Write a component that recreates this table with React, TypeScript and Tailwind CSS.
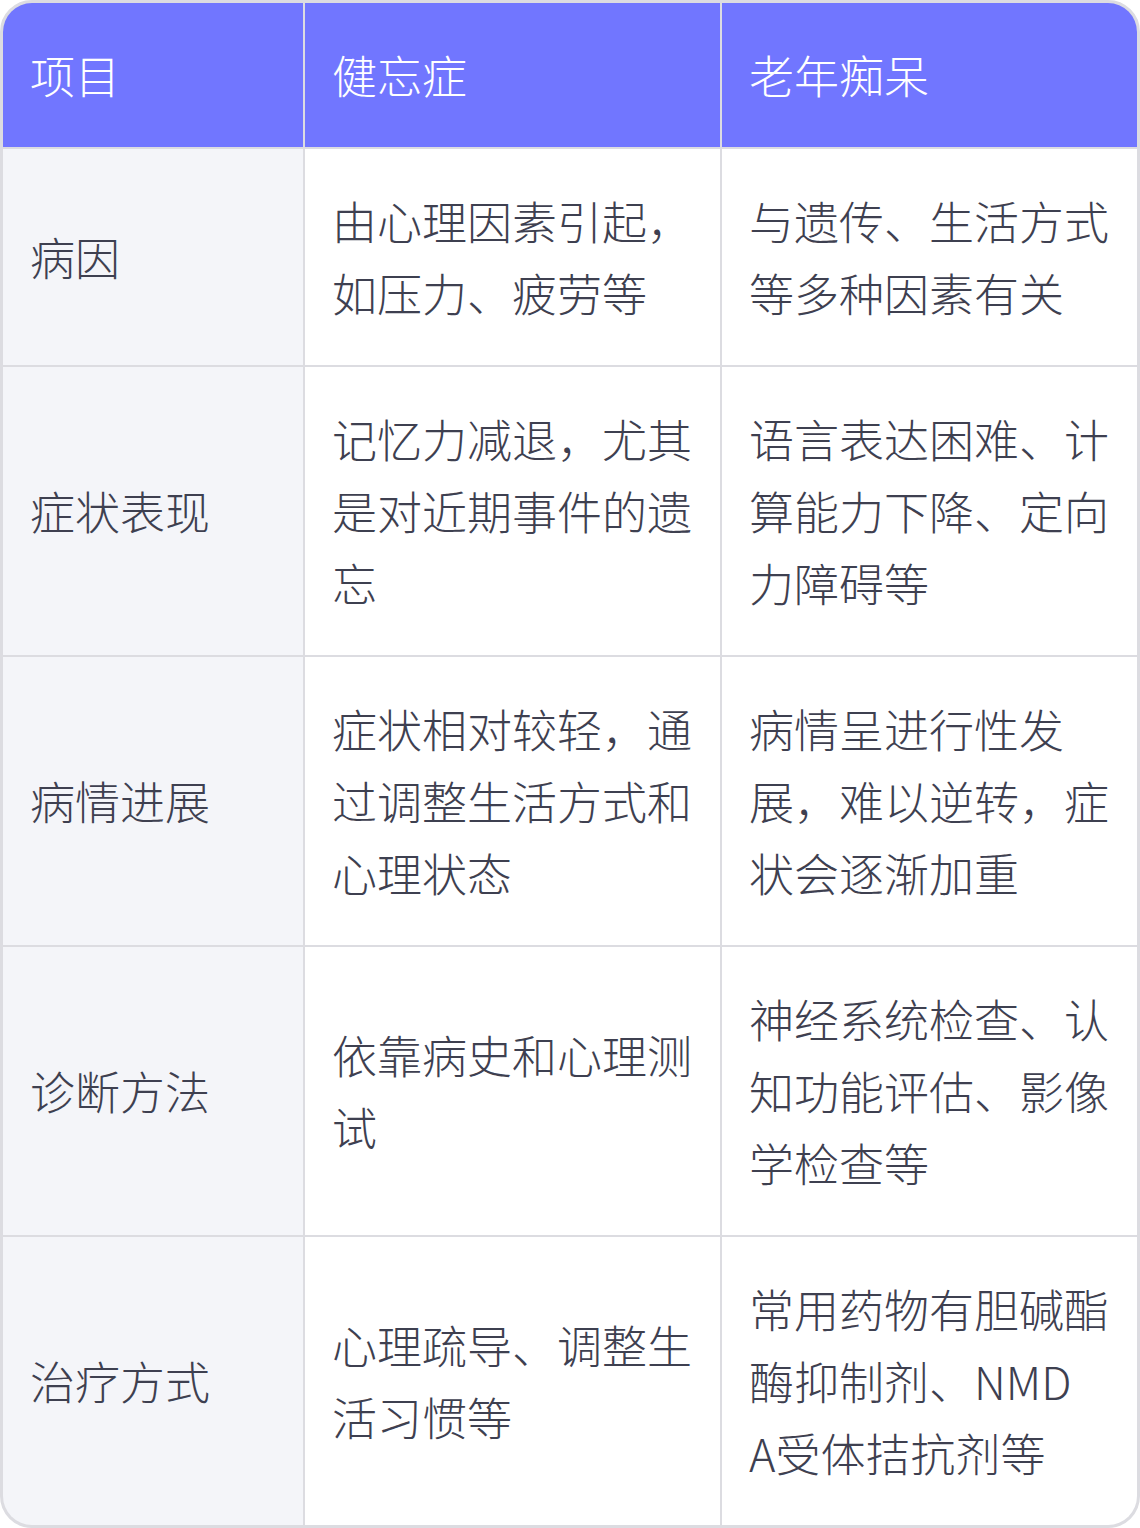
import React from "react";

const rows: [string, React.ReactNode, React.ReactNode][] = [
  ["病因", "由心理因素引起，如压力、疲劳等", "与遗传、生活方式等多种因素有关"],
  ["症状表现", "记忆力减退，尤其是对近期事件的遗忘", "语言表达困难、计算能力下降、定向力障碍等"],
  ["病情进展", "症状相对较轻，通过调整生活方式和心理状态", "病情呈进行性发展，难以逆转，症状会逐渐加重"],
  ["诊断方法", "依靠病史和心理测试", "神经系统检查、认知功能评估、影像学检查等"],
  [
    "治疗方式",
    "心理疏导、调整生活习惯等",
    <>
      常用药物有胆碱酯酶抑制剂、NMD
      <br />
      A受体拮抗剂等
    </>,
  ],
];

export default function App() {
  return (
    <div
      className="w-[1140px] h-[1528px] bg-white"
      style={{ fontFamily: '"Noto Sans CJK SC", "Noto Sans", sans-serif' }}
    >
      <div className="rounded-[32px] border-[3px] border-[#dcdce1] overflow-hidden bg-[#dcdce1]">
        <div className="grid grid-cols-[300px_415px_415px] gap-[2px] text-[45px] leading-[72px] font-light">
          {["项目", "健忘症", "老年痴呆"].map((h) => (
            <div key={h} className="bg-[#7176ff] text-white pl-[27px] pr-[27px] py-[36px]">
              {h}
            </div>
          ))}
          {rows.map((r) => (
            <React.Fragment key={r[0]}>
              <div className="bg-[#f4f5f9] text-[#3e4050] pl-[27px] pr-[27px] py-[36px] flex items-center">
                {r[0]}
              </div>
              <div className="bg-white text-[#3e4050] pl-[27px] pr-[27px] py-[36px] flex items-center break-all">
                <span>{r[1]}</span>
              </div>
              <div className="bg-white text-[#3e4050] pl-[27px] pr-[27px] py-[36px] flex items-center break-all">
                <span>{r[2]}</span>
              </div>
            </React.Fragment>
          ))}
        </div>
      </div>
    </div>
  );
}
